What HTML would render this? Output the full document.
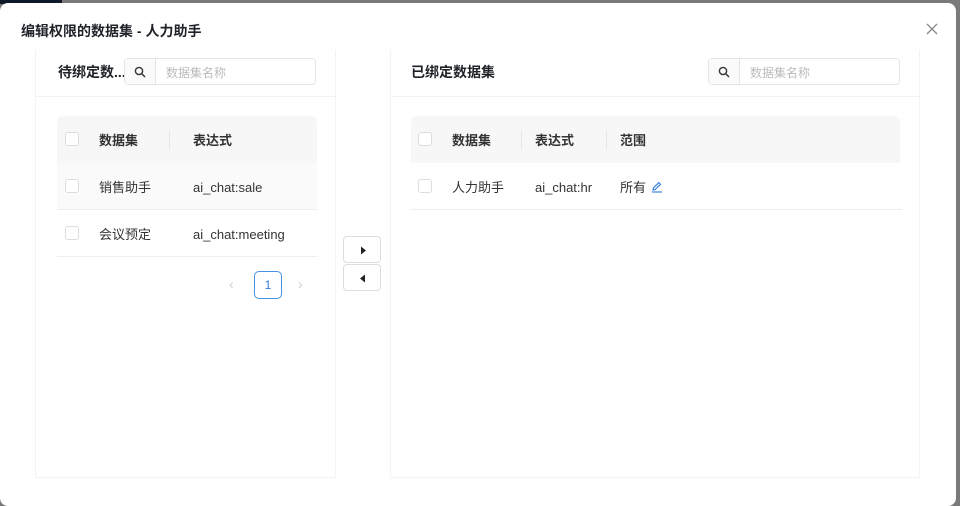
<!DOCTYPE html><html><head><meta charset="utf-8"><style>
*{box-sizing:border-box;margin:0;padding:0}
body{width:960px;height:504px;overflow:hidden;background:#7a7a7a;font-family:"Liberation Sans","Noto Sans CJK SC",sans-serif;position:relative}
.top{position:absolute;left:0;top:0;width:62px;height:4px;background:#0e1a2a}
.modal{position:absolute;left:0;top:3px;width:956px;height:503px;background:#fff;border-radius:8px}
.title{position:absolute;left:21px;top:18px;font-size:14px;font-weight:bold;color:#1f2329;line-height:20px}
.close{position:absolute;left:924px;top:18px;width:16px;height:16px}
.panel{position:absolute;top:47px;border:1px solid #f3f3f3;border-top:none;height:428px}
.ph{position:absolute;left:0;right:0;top:0;height:47px;border-bottom:1px solid #f2f2f2}
.pt{position:absolute;top:12px;font-size:14px;font-weight:bold;color:#1f2329;line-height:20px}
.search{position:absolute;top:8px;height:27px;border:1px solid #e4e4e4;border-radius:4px;display:flex}
.search .ic{width:31px;border-right:1px solid #e4e4e4;background:#fafafa;display:flex;align-items:center;justify-content:center}
.search .ph2{padding-left:10px;font-size:12px;color:#bbb;line-height:28px}
.thead{position:absolute;height:47px;background:#f7f7f8;border-radius:6px 6px 0 0;font-size:13px;font-weight:bold;color:#333}
.row{position:absolute;height:47px;border-bottom:1px solid #eee;font-size:13px;color:#333}
.cell{position:absolute;top:0;line-height:50px}
.cb{position:absolute;top:16px;width:14px;height:14px;border:1px solid #ddd;border-radius:3px;background:#fff}
.sep{position:absolute;top:14px;width:1px;height:20px;background:#e8e8e8}
.btn{position:absolute;left:343px;width:38px;height:27px;border:1px solid #ddd;border-radius:4px;background:#fff}
</style></head><body>
<div class="top"></div>
<div class="modal">
<div class="title">编辑权限的数据集 - 人力助手</div>
<svg class="close" viewBox="0 0 16 16"><path d="M3 3L13 13M13 3L3 13" stroke="#888" stroke-width="1.3"/></svg>

<div class="panel" style="left:35px;width:301px">
 <div class="ph"><div class="pt" style="left:22px">待绑定数...</div>
 <div class="search" style="left:88px;width:192px"><div class="ic"><svg width="12" height="12" viewBox="0 0 12 12"><circle cx="5" cy="5" r="3.6" fill="none" stroke="#333" stroke-width="1.4"/><path d="M7.6 7.6L11 11" stroke="#333" stroke-width="1.5"/></svg></div><div class="ph2">数据集名称</div></div></div>
 <div class="thead" style="left:21px;top:66px;width:260px"><div class="cb" style="left:8px"></div><div class="cell" style="left:42px">数据集</div><div class="sep" style="left:112px"></div><div class="cell" style="left:136px">表达式</div></div>
 <div class="row" style="left:21px;top:113px;width:260px;background:#fafafa"><div class="cb" style="left:8px"></div><div class="cell" style="left:42px">销售助手</div><div class="cell" style="left:136px">ai_chat:sale</div></div>
 <div class="row" style="left:21px;top:160px;width:260px"><div class="cb" style="left:8px"></div><div class="cell" style="left:42px">会议预定</div><div class="cell" style="left:136px">ai_chat:meeting</div></div>
 <div style="position:absolute;left:193px;top:226px;color:#ccc;font-size:14px;line-height:16px">‹</div>
 <div style="position:absolute;left:218px;top:221px;width:28px;height:28px;border:1px solid #4a90e2;border-radius:5px;color:#2f7ad9;font-size:12px;text-align:center;line-height:26px">1</div>
 <div style="position:absolute;left:262px;top:226px;color:#ccc;font-size:14px;line-height:16px">›</div>
</div>

<div class="btn" style="top:233px"><svg width="38" height="27" viewBox="0 0 38 27"><path d="M17 9.5L22 13.5L17 17.5Z" fill="#222"/></svg></div>
<div class="btn" style="top:261px"><svg width="38" height="27" viewBox="0 0 38 27"><path d="M21 9.5L16 13.5L21 17.5Z" fill="#222"/></svg></div>

<div class="panel" style="left:390px;width:530px">
 <div class="ph"><div class="pt" style="left:20px">已绑定数据集</div>
 <div class="search" style="left:317px;width:192px"><div class="ic"><svg width="12" height="12" viewBox="0 0 12 12"><circle cx="5" cy="5" r="3.6" fill="none" stroke="#333" stroke-width="1.4"/><path d="M7.6 7.6L11 11" stroke="#333" stroke-width="1.5"/></svg></div><div class="ph2">数据集名称</div></div></div>
 <div class="thead" style="left:20px;top:66px;width:489px"><div class="cb" style="left:7px"></div><div class="cell" style="left:41px">数据集</div><div class="sep" style="left:110px"></div><div class="cell" style="left:124px">表达式</div><div class="sep" style="left:195px"></div><div class="cell" style="left:209px">范围</div></div>
 <div class="row" style="left:20px;top:113px;width:491px"><div class="cb" style="left:7px"></div><div class="cell" style="left:41px">人力助手</div><div class="cell" style="left:124px">ai_chat:hr</div><div class="cell" style="left:209px">所有</div>
 <svg style="position:absolute;left:240px;top:18px" width="12" height="12" viewBox="0 0 12 12"><path d="M2 9L2.5 6.8L7.8 1.5L9.5 3.2L4.2 8.5Z" fill="none" stroke="#2f7ad9" stroke-width="1.1"/><path d="M1 11H11" stroke="#2f7ad9" stroke-width="1.1"/></svg></div>
</div>
</div>
</body></html>
